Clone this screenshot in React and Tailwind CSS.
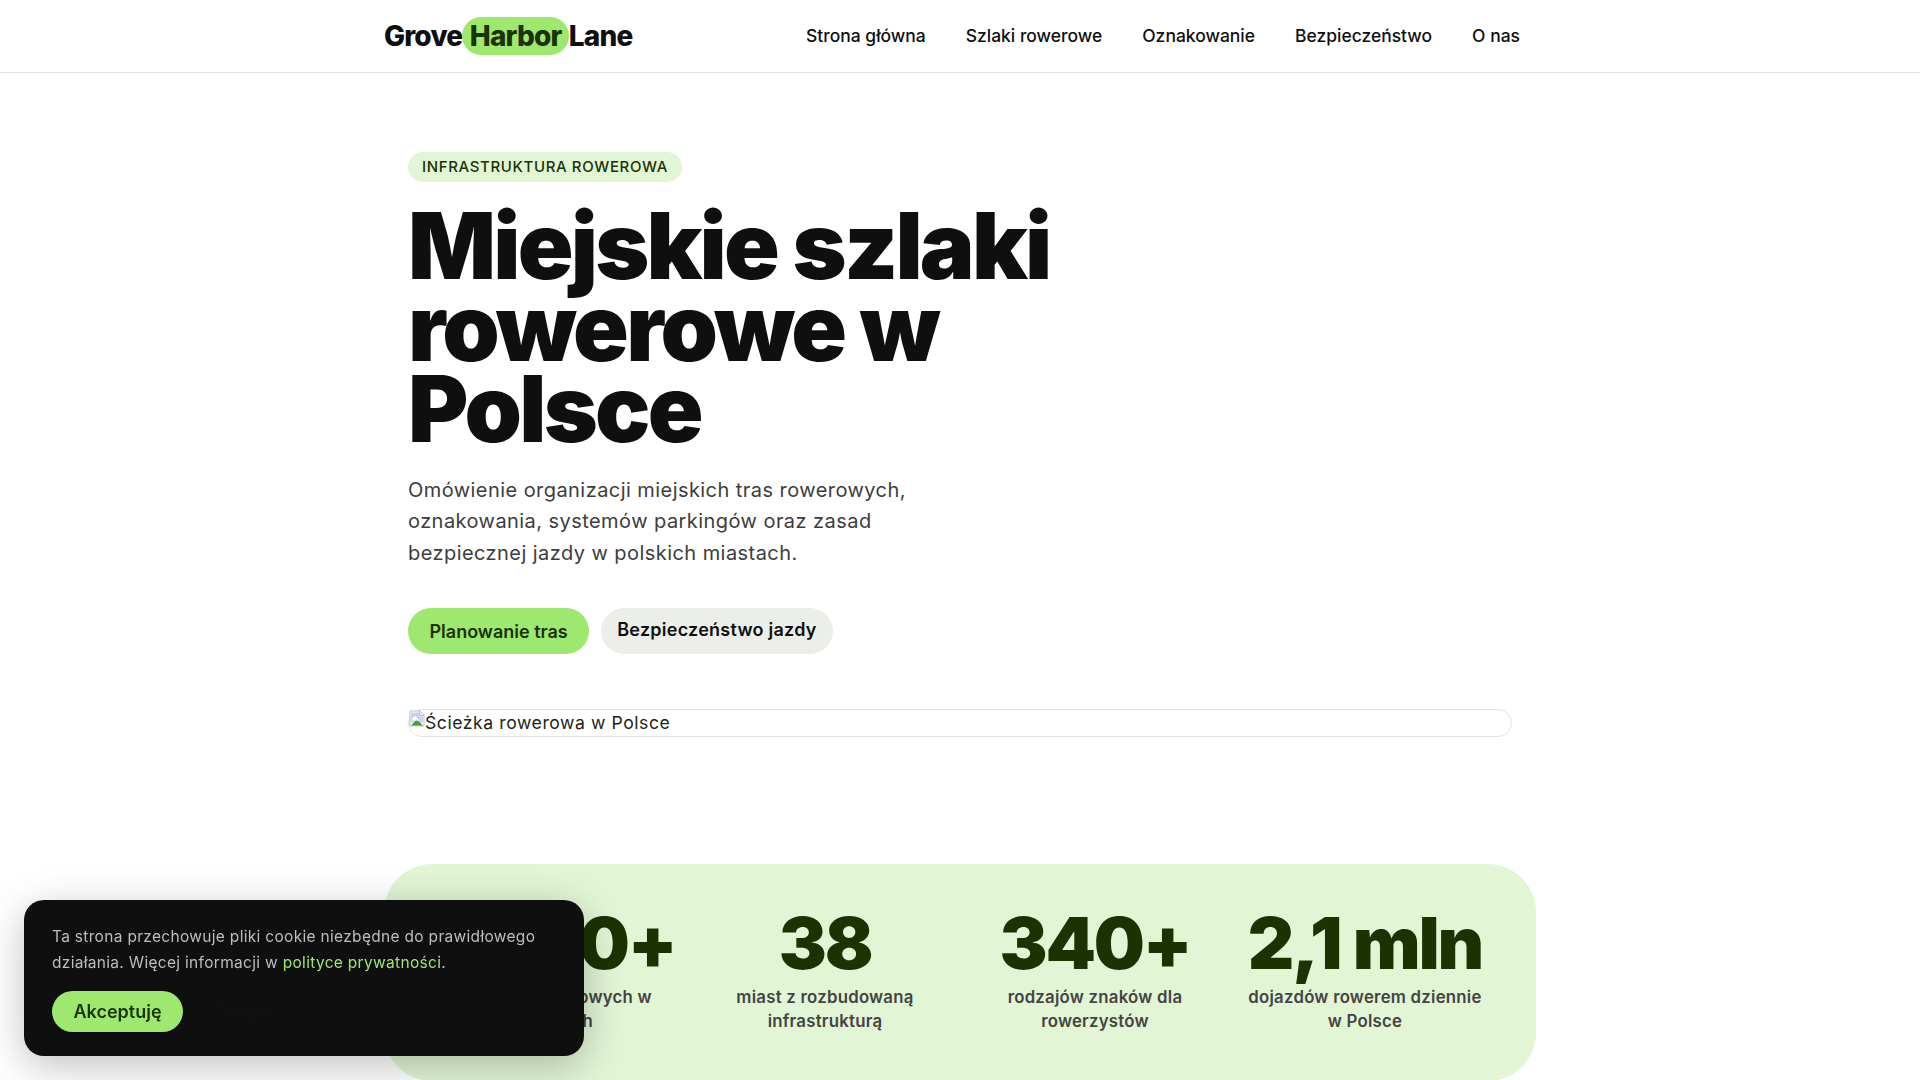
import React from 'react'

const navLinks = ['Strona główna', 'Szlaki rowerowe', 'Oznakowanie', 'Bezpieczeństwo', 'O nas']

const stats = [
  { value: '4800+', label: 'km dróg rowerowych w miastach' },
  { value: '38', label: 'miast z rozbudowaną infrastrukturą' },
  { value: '340+', label: 'rodzajów znaków dla rowerzystów' },
  { value: '2,1 mln', label: 'dojazdów rowerem dziennie w Polsce' },
]

function BrokenImageIcon() {
  return (
    <svg width="16" height="17" viewBox="0 0 16 16" className="shrink-0">
      <path d="M1 .5h10l4 4v11H1z" fill="#fff" stroke="#bdbdbd" strokeWidth="1" />
      <path d="M10.5 .5v4.5h4.5" fill="#f2f2f2" stroke="#bdbdbd" strokeWidth="1" />
      <path d="M2 2h8v4h4v6H2z" fill="#c3d5f7" />
      <path d="M3 8l3-2.5 2.5 2 2 2.5H3z" fill="#fff" />
      <path d="M2 15l5-5 3 1 4 4z" fill="#4b9b35" />
    </svg>
  )
}

function App() {
  return (
    <div className="min-h-screen bg-white text-[#0f0f0f] font-['Inter',sans-serif]">
      <header className="border-b border-[#e5e5e5]">
        <div className="max-w-[1152px] mx-auto h-[72px] flex items-center justify-between">
          <a className="flex items-center text-[28px] font-extrabold tracking-[-0.84px] text-[#0f0f0f]">
            Grove
            <span className="px-[7.5px] h-[38px] flex items-center rounded-[19px] bg-[#9fe870] text-[#1a3300]">Harbor</span>
            Lane
          </a>
          <nav className="flex items-center gap-2 pt-px text-[17.48px] font-medium">
            {navLinks.map((link) => (
              <a key={link} className="px-4 py-2">{link}</a>
            ))}
          </nav>
        </div>
      </header>

      <main className="max-w-[1152px] mx-auto">
        <section className="px-6 pt-[79px]">
          <span className="inline-block rounded-full bg-[#e2f5d5] px-[14px] py-[6px] text-[15px] leading-[18px] font-medium tracking-[0.63px] text-[#1a3300]">
            INFRASTRUKTURA ROWEROWA
          </span>
          <h1 className="mt-[23px] max-w-[800px] text-[92px] leading-[81.5px] font-black tracking-[-2.76px] text-[#0f0f0f]">
            Miejskie szlaki rowerowe w Polsce
          </h1>
          <p className="mt-[25px] max-w-[520px] text-[20px] leading-[31.6px] tracking-[0.44px] text-[#3d3d3d]">
            Omówienie organizacji miejskich tras rowerowych, oznakowania, systemów parkingów oraz zasad bezpiecznej jazdy w polskich miastach.
          </p>
          <div className="mt-[39px] flex gap-3">
            <button className="h-[46px] px-[21.5px] rounded-full bg-[#9fe870] text-[#1a3300] text-[18px] font-semibold">
              Planowanie tras
            </button>
            <button className="h-[46px] px-4 pb-1 rounded-full bg-[#eceeea] text-[18px] font-semibold tracking-[0.25px] text-[#0f0f0f]">
              Bezpieczeństwo jazdy
            </button>
          </div>
          <div className="mt-[55px] flex items-start h-[28px] rounded-[20px] border border-[#e2e2e2] text-[17.6px] leading-[26px] tracking-[0.56px] text-[#222]">
            <BrokenImageIcon />
            <span>Ścieżka rowerowa w Polsce</span>
          </div>
        </section>

        <section className="mt-[127px] grid grid-cols-4 gap-6 rounded-[48px] bg-[#e2f5d5] px-12 pt-[49px] pb-12">
          {stats.map((stat) => (
            <div key={stat.value} className="text-center">
              <div className="text-[72px] leading-[60px] font-black tracking-[-2.16px] text-[#1a3300]">{stat.value}</div>
              <div className="mt-[12px] text-[16.8px] leading-[24px] font-semibold tracking-[0.24px] text-[#444]">{stat.label}</div>
            </div>
          ))}
        </section>
      </main>

      {/* cookie box */}
      <div className="fixed left-6 bottom-6 w-[560px] h-[156px] rounded-[20px] bg-[#0f0f0f] px-7 py-6 shadow-[0_10px_40px_rgba(0,0,0,0.25)]">
        <p className="text-[15.5px] leading-[26px] tracking-[0.31px] text-[#bdbdbd]">
          Ta strona przechowuje pliki cookie niezbędne do prawidłowego działania. Więcej informacji w{' '}
          <a className="text-[#9fe870]">polityce prywatności</a>.
        </p>
        <div className="mt-[15px] flex items-center gap-2">
          <button className="h-[41px] px-[21.5px] rounded-full bg-[#9fe870] text-[#1a3300] text-[18px] font-semibold">
            Akceptuję
          </button>
          <button className="h-[41px] px-[22px] rounded-full bg-transparent text-[#111] text-[18px] font-semibold">
            Odrzuć
          </button>
        </div>
      </div>
    </div>
  )
}

export default App
